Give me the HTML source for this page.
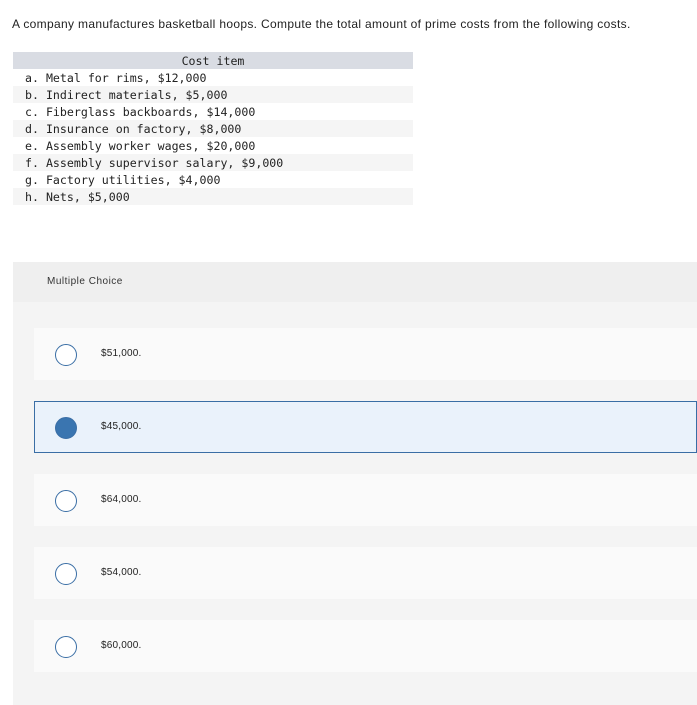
<!DOCTYPE html>
<html><head><style>
body{margin:0;background:#fff;width:697px;height:705px;overflow:hidden;position:relative;font-family:"Liberation Sans",sans-serif;}
.q{position:absolute;left:12px;top:17px;font-size:12px;color:#222;letter-spacing:0.33px;}
table{position:absolute;left:13px;top:52px;width:400px;border-collapse:collapse;font-family:"DejaVu Sans Mono","Liberation Mono",monospace;font-size:11.6px;color:#222;}
th{background:#d9dce3;font-weight:normal;height:17px;padding:0;}
td{height:17px;padding:0 0 0 12px;}
tr:nth-child(odd) td{background:#f5f5f5;}
.mc{position:absolute;left:13px;top:262px;width:684px;height:443px;background:#f4f4f4;}
.mh{height:40px;background:#efefef;font-size:10px;color:#333;line-height:40px;padding-left:34px;letter-spacing:0.5px;}
.o{position:absolute;left:21px;width:663px;height:52px;background:#fafafa;box-sizing:border-box;}
.o.s{background:#eaf2fb;border:1px solid #3a6ea5;}
.c{position:absolute;left:21px;top:16px;width:22px;height:22px;border:1.5px solid #3a6ea5;border-radius:50%;background:#fff;box-sizing:border-box;}
.s .c{background:#3a75b0;left:20px;top:15px;}
.t{position:absolute;left:67px;top:0;line-height:52px;font-size:10px;color:#222;letter-spacing:0.2px;}
.s .t{left:66px;line-height:50px;}
</style></head><body>
<div class="q">A company manufactures basketball hoops. Compute the total amount of prime costs from the following costs.</div>
<table>
<tr><th>Cost item</th></tr>
<tr><td>a. Metal for rims, $12,000</td></tr>
<tr><td>b. Indirect materials, $5,000</td></tr>
<tr><td>c. Fiberglass backboards, $14,000</td></tr>
<tr><td>d. Insurance on factory, $8,000</td></tr>
<tr><td>e. Assembly worker wages, $20,000</td></tr>
<tr><td>f. Assembly supervisor salary, $9,000</td></tr>
<tr><td>g. Factory utilities, $4,000</td></tr>
<tr><td>h. Nets, $5,000</td></tr>
</table>
<div class="mc">
<div class="mh">Multiple Choice</div>
<div class="o" style="top:66px"><div class="c"></div><div class="t">$51,000.</div></div>
<div class="o s" style="top:139px"><div class="c"></div><div class="t">$45,000.</div></div>
<div class="o" style="top:212px"><div class="c"></div><div class="t">$64,000.</div></div>
<div class="o" style="top:285px"><div class="c"></div><div class="t">$54,000.</div></div>
<div class="o" style="top:358px"><div class="c"></div><div class="t">$60,000.</div></div>
</div>
</body></html>
